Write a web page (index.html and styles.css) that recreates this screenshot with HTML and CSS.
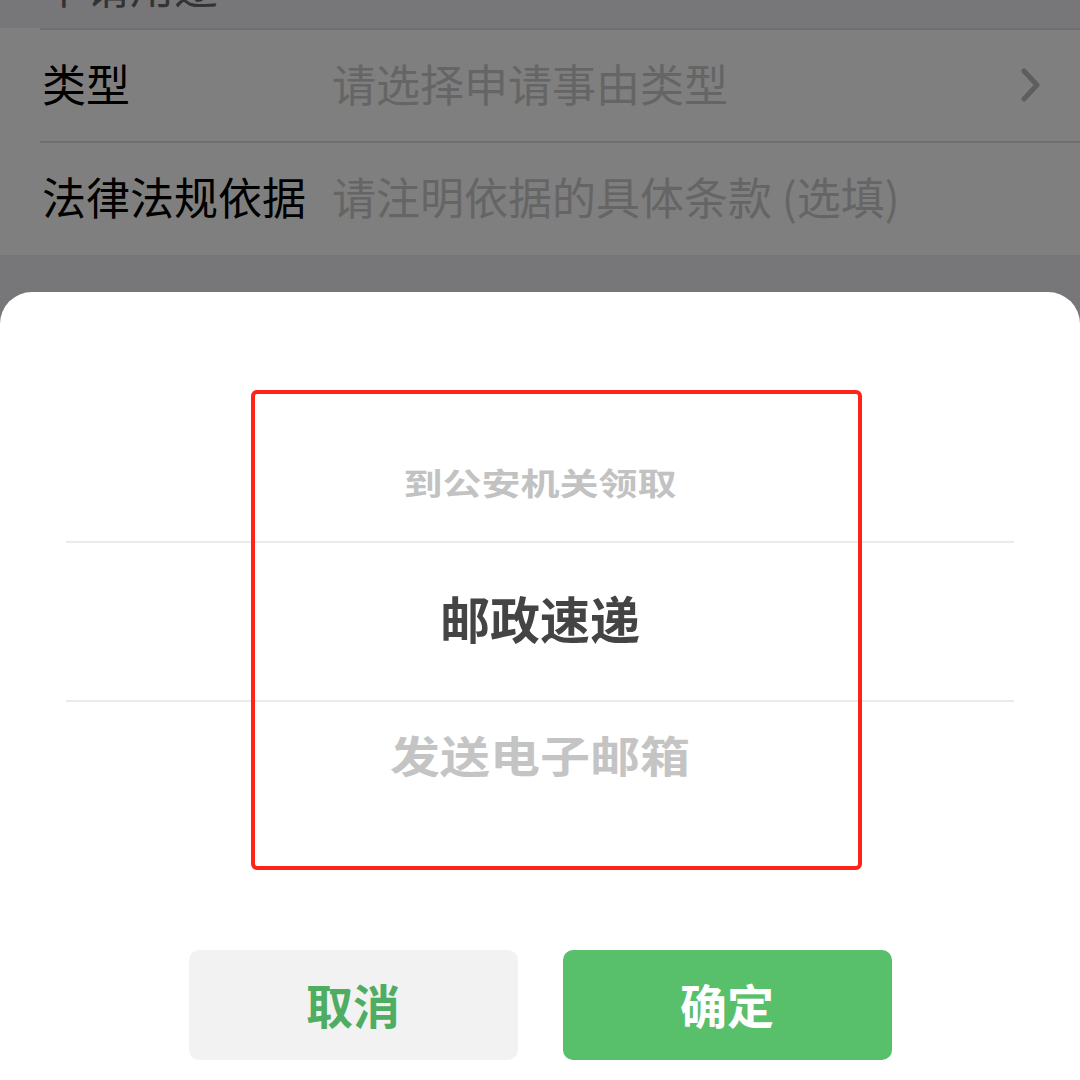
FILE: index.html
```html
<!DOCTYPE html>
<html lang="zh-CN">
<head>
    <meta charset="UTF-8">
    <meta name="viewport" content="width=device-width, initial-scale=1.0">
    <link rel="stylesheet" href="styles.css">
    <title>领取方式</title>
</head>
<body>
<div class="page">
    <div class="section-title"><span>申请用途</span></div>
    <div class="form-card">
        <div class="form-row">
            <span class="form-label">类型</span>
            <span class="form-value">请选择申请事由类型</span>
            <svg class="form-arrow" width="22" height="34" viewBox="0 0 22 34">
                <path d="M4 3 L17 17 L4 31" fill="none" stroke="#bcbcbc" stroke-width="5" stroke-linecap="round" stroke-linejoin="round"/>
            </svg>
        </div>
        <div class="form-row">
            <span class="form-label">法律法规依据</span>
            <span class="form-value">请注明依据的具体条款 (选填)</span>
        </div>
    </div>
</div>

<div class="mask"></div>

<div class="sheet">
    <div class="picker">
        <div class="picker-item picker-item_top"><span>到公安机关领取</span></div>
        <div class="picker-item picker-item_active"><span>邮政速递</span></div>
        <div class="picker-item picker-item_bottom"><span>发送电子邮箱</span></div>
    </div>
    <div class="sheet-buttons">
        <button class="btn btn_cancel">取消</button>
        <button class="btn btn_ok">确定</button>
    </div>
    <!-- красная рамка-пометка поверх колеса -->
    <div class="mark"></div>
</div>
</body>
</html>
```

FILE: styles.css
```css
body, html {
    margin: 0;
    padding: 0;
    height: 100%;
}

body {
    width: 1080px;
    height: 1080px;
    overflow: hidden;
    position: relative;
    background-color: #efeff3;
    font-family: "Noto Sans CJK SC", "Noto Sans", sans-serif;
}

/* заголовок секции уходит за верхний край экрана */
.section-title {
    height: 28px;
    padding-left: 42px;
    font-size: 44px;
    line-height: 44px;
    color: #666;
    overflow: hidden;
}

.section-title span {
    display: block;
    margin-top: -37px;
}

.form-card {
    background-color: #fff;
}

.form-row {
    height: 113px;
    margin-left: 40px;
    padding-left: 2px;
    padding-right: 38px;
    padding-bottom: 6px;
    display: flex;
    align-items: center;
    border-top: 2px solid #dedede;
    box-sizing: border-box;
    font-size: 44px;
}

.form-row + .form-row {
    height: 114px;
}

.form-label {
    width: 290px;
    color: #000;
}

.form-value {
    flex: 1;
    color: #cacaca;
}

.form-arrow {
    display: block;
    margin-top: 4px;
}

.mask {
    position: absolute;
    top: 0;
    left: 0;
    right: 0;
    bottom: 0;
    background-color: rgba(0, 0, 0, 0.5);
}

.sheet {
    position: absolute;
    top: 292px;
    left: 0;
    right: 0;
    bottom: 0;
    background-color: #fff;
    border-radius: 32px 32px 0 0;
    padding-top: 112px;
    box-sizing: border-box;
}

.picker {
    margin: 0 66px;
}

.picker-item {
    display: flex;
    justify-content: center;
    align-items: center;
    box-sizing: border-box;
    font-weight: bold;
}

.picker-item span {
    display: block;
    line-height: 1.2;
}

.picker-item_top {
    height: 137px;
    padding-top: 18px;
    font-size: 39px;
    color: #c2c2c2;
}

.picker-item_top span {
    transform: scaleY(0.8);
}

.picker-item_active {
    height: 161px;
    padding-bottom: 10px;
    border-top: 2px solid #ebebeb;
    border-bottom: 2px solid #ebebeb;
    font-size: 50px;
    color: #444;
}

.picker-item_bottom {
    height: 114px;
    padding-bottom: 10px;
    font-size: 50px;
    color: #c4c4c4;
}

.picker-item_bottom span {
    transform: scaleY(0.86);
}

.sheet-buttons {
    margin-top: 134px;
    display: flex;
    justify-content: center;
    gap: 45px;
}

.btn {
    width: 329px;
    height: 110px;
    border: none;
    border-radius: 10px;
    font-family: inherit;
    font-size: 47px;
    font-weight: bold;
    padding: 0 0 4px;
}

.btn_cancel {
    background-color: #f2f2f2;
    color: #4fad62;
}

.btn_ok {
    background-color: #58bf6a;
    color: #fff;
}

.mark {
    position: absolute;
    top: 98px;
    left: 251px;
    width: 611px;
    height: 480px;
    border: 4px solid #ff2417;
    border-radius: 6px;
    box-sizing: border-box;
}
```
